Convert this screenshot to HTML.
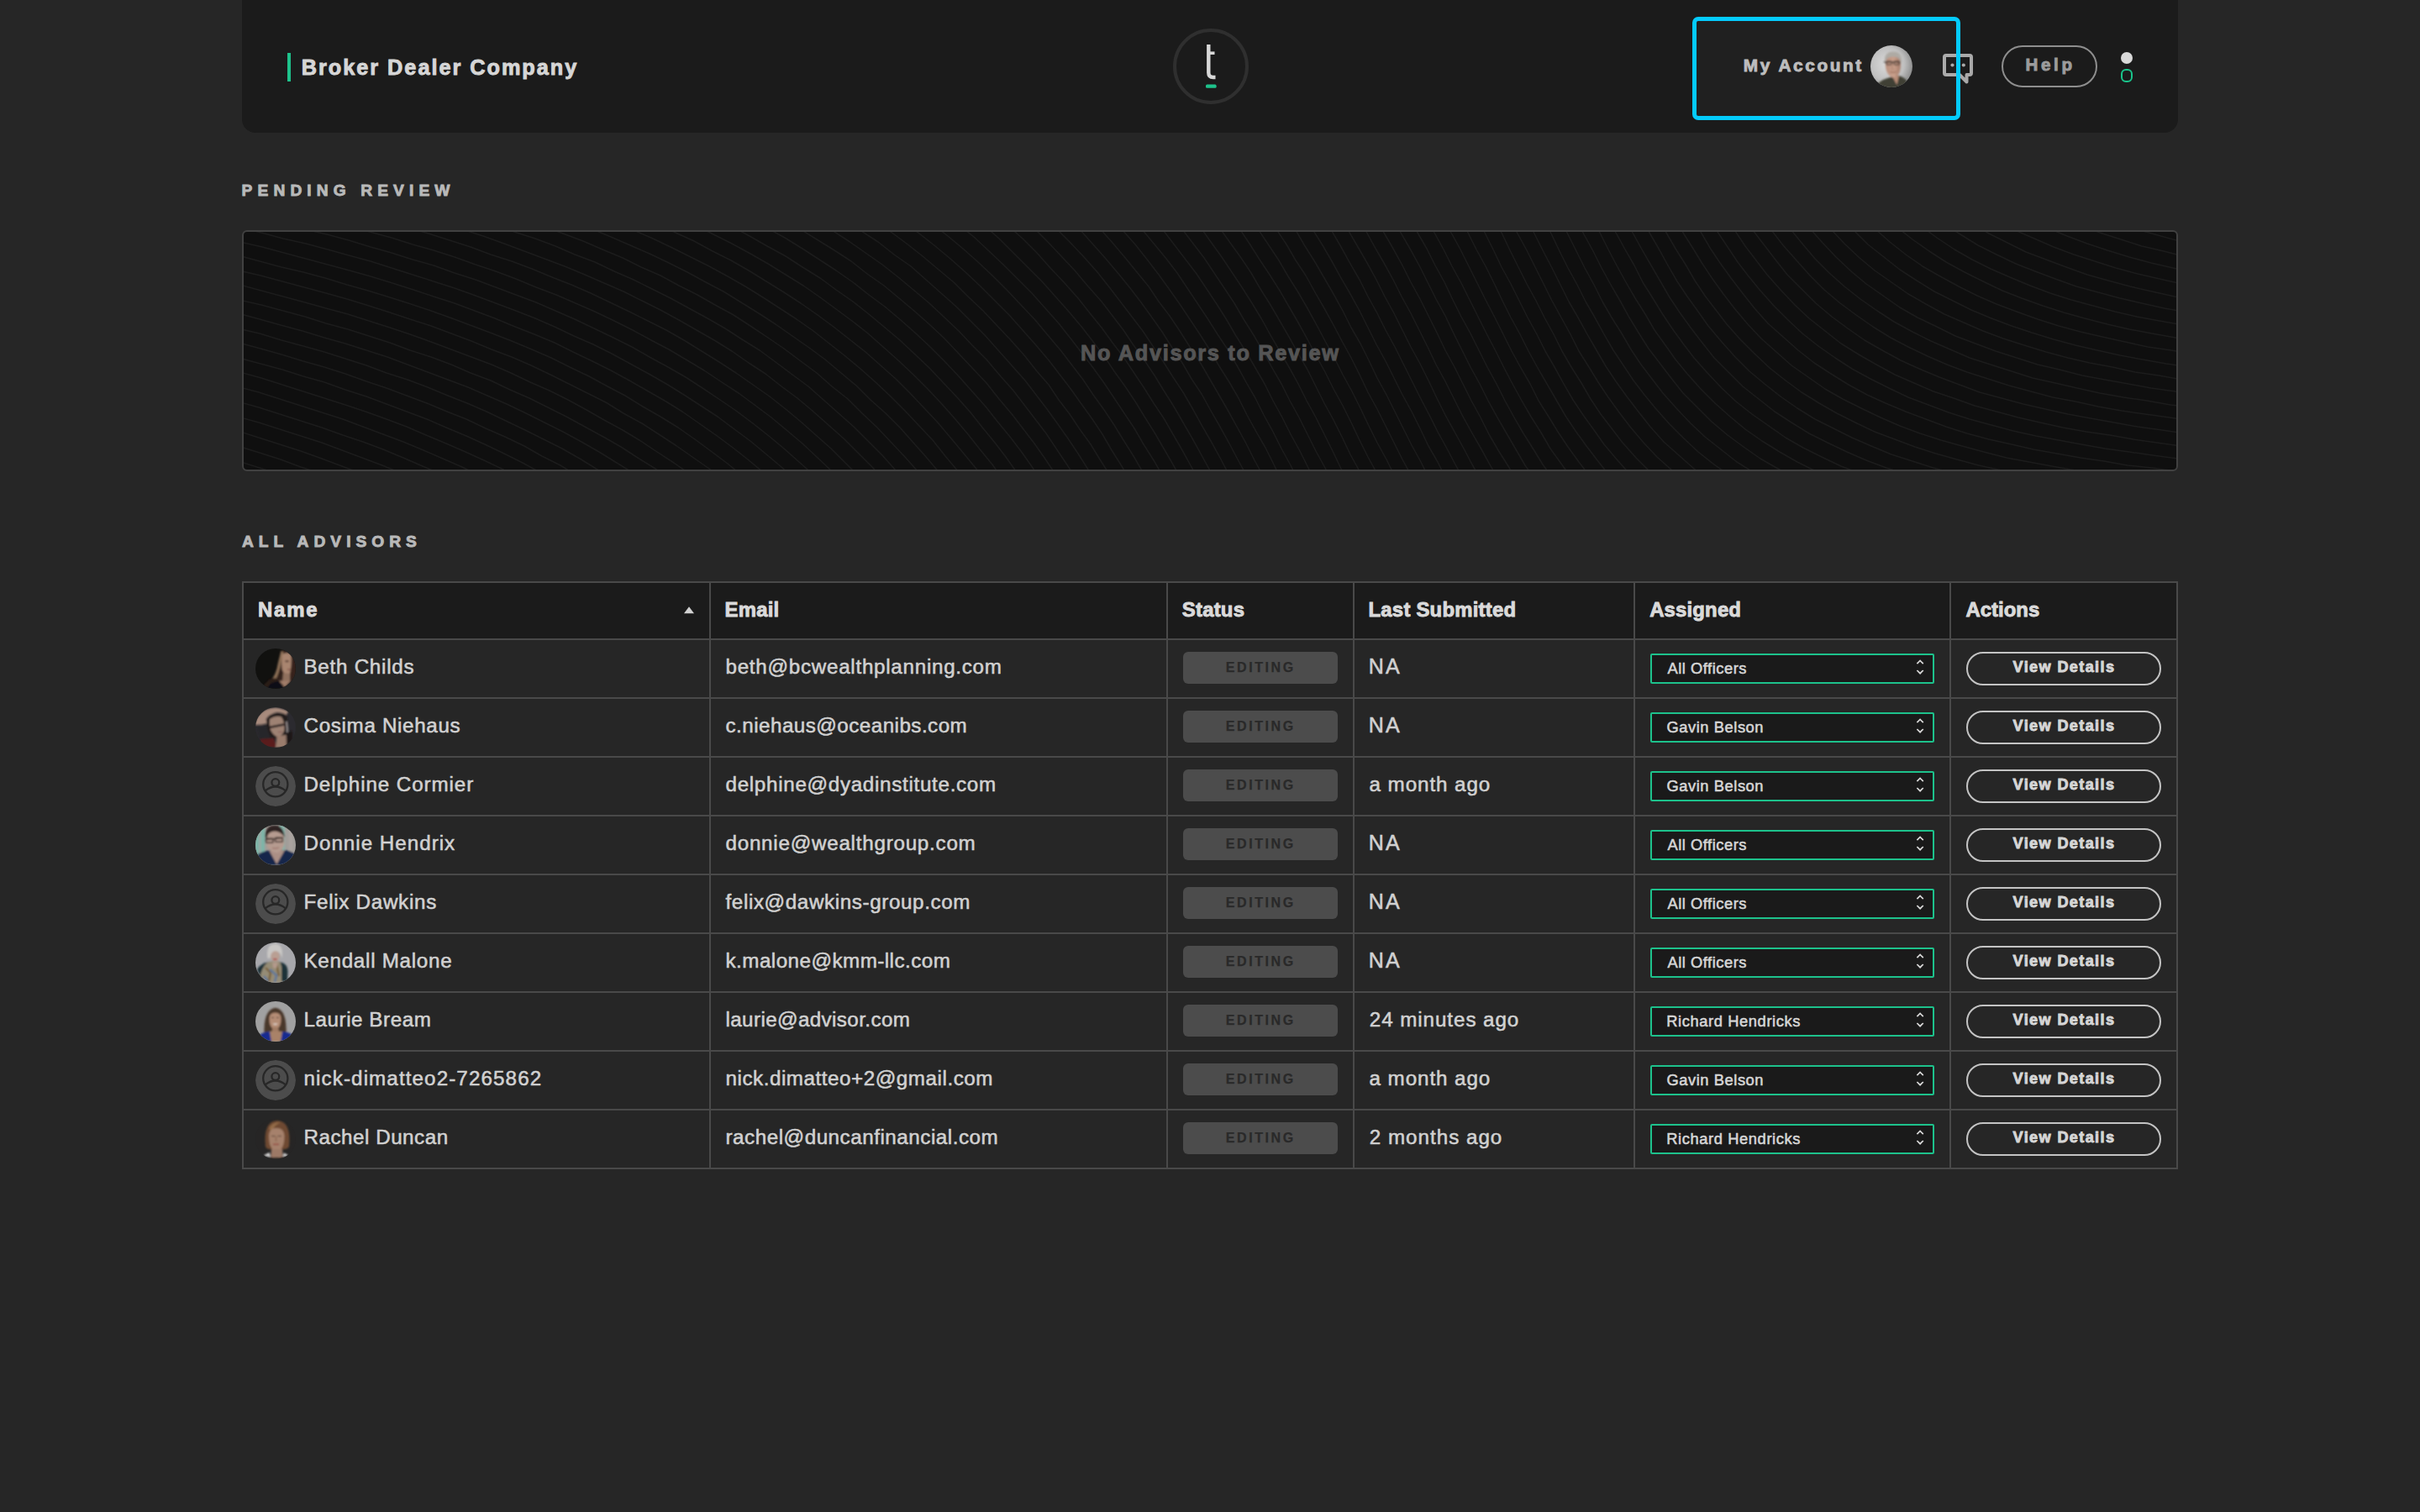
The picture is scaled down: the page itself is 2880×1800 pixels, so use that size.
<!DOCTYPE html>
<html><head><meta charset="utf-8"><title>Advisors</title><style>
*{margin:0;padding:0;box-sizing:border-box}
html,body{width:2880px;height:1800px;overflow:hidden;background:#262626}
body{font-family:"Liberation Sans",sans-serif;position:relative;color:#d4d4d4}
.abs{position:absolute}
.t{position:absolute;white-space:nowrap;line-height:1;-webkit-text-stroke:0.55px currentColor}
.t.b{-webkit-text-stroke:0.9px currentColor}
.t.ns{-webkit-text-stroke:0.25px currentColor}
#hdr{left:288px;top:0;width:2304px;height:158px;background:#1b1b1b;border-radius:0 0 16px 16px}
#gbar{left:342px;top:63px;width:4px;height:34px;background:#1ec28b}
#acct{left:2014px;top:20px;width:319px;height:123px;border:5px solid #04cbfd;border-radius:7px;background:rgba(255,255,255,0.022)}
#help{left:2382px;top:54px;width:114px;height:50px;border:2px solid #8e8e8e;border-radius:25px}
#wdot{left:2524px;top:62px;width:14px;height:14px;border-radius:7px;background:#d9d9d9}
#gdot{left:2524px;top:82px;width:14px;height:16px;border-radius:6px;border:2px solid #19c48b}
#pbox{left:288px;top:274px;width:2304px;height:287px;border:2px solid #414141;border-radius:6px;background:#0f0f0f;overflow:hidden}
#tbl{left:288px;top:692px;width:2304px;height:700px;background:#494949}
.c{position:absolute;background:#262626}
.c.h{background:#1b1b1b}
.badge{position:absolute;width:184px;height:38px;border-radius:6px;background:#4c4c4c}
.sel{position:absolute;width:338px;height:36px;border:2px solid #1dc28c;border-radius:2px;background:#1a1a1a}
.vd{position:absolute;width:232px;height:40px;border:2px solid #c4c4c4;border-radius:20px}
.av{position:absolute;width:48px;height:48px;border-radius:24px;overflow:hidden}
</style></head><body><div id="hdr" class="abs"></div>
<div id="gbar" class="abs"></div>
<div class="t bdc b" style="left:358.80px;top:67.58px;font-size:25.3px;font-weight:700;color:#d6d6d6;letter-spacing:1.963px">Broker Dealer Company</div>
<svg class="abs" style="left:1391px;top:29px" width="100" height="100" viewBox="0 0 100 100">
<circle cx="50" cy="50" r="43" fill="none" stroke="#2f2f2f" stroke-width="4"/>
<path d="M47.3 24 V57.5 Q47.3 63 52.8 63 H55.5" fill="none" stroke="#d8d8d8" stroke-width="4.4"/>
<path d="M47.3 34.2 H54.5" fill="none" stroke="#d8d8d8" stroke-width="3.6"/>
<rect x="44" y="71.6" width="12.6" height="4.2" rx="1.6" fill="#1ec28b"/>
</svg>
<svg class="abs" style="left:2308px;top:60px" width="48" height="44" viewBox="0 0 48 44">
<path d="M8 6 H36 Q38 6 38 8 V27 Q38 29 36 29 H32.5 V37.5 L24 29 H8 Q6 29 6 27 V8 Q6 6 8 6 Z" fill="none" stroke="#a9a9a9" stroke-width="4" stroke-linejoin="round"/>
<circle cx="15.5" cy="17.5" r="2.1" fill="#a9a9a9"/><circle cx="28.8" cy="17.5" r="2.1" fill="#a9a9a9"/>
</svg>
<div id="acct" class="abs"></div>
<div class="t myacct b" style="left:2074.80px;top:67.99px;font-size:20.8px;font-weight:700;color:#bdbdbd;letter-spacing:2.599px">My Account</div>
<svg class="abs" style="left:2226px;top:54px" width="50" height="50" viewBox="0 0 50 50">
<defs><clipPath id="cpa"><circle cx="25" cy="25" r="25"/></clipPath>
<radialGradient id="rga" cx="0.4" cy="0.45" r="0.62"><stop offset="0" stop-color="#dcdcdc"/><stop offset="0.65" stop-color="#bfbfbf"/><stop offset="1" stop-color="#8c8c8c"/></radialGradient>
<linearGradient id="fga" x1="0" x2="1"><stop offset="0" stop-color="#b98f7c"/><stop offset="0.55" stop-color="#c9a08c"/><stop offset="1" stop-color="#a47a68"/></linearGradient>
<filter id="bl1" x="-20%" y="-20%" width="140%" height="140%"><feGaussianBlur stdDeviation="1.0"/></filter></defs>
<g clip-path="url(#cpa)"><rect width="50" height="50" fill="url(#rga)"/>
<g filter="url(#bl1)">
<path d="M6 52 Q9 42 19 39.5 L31 35.5 Q40 37 43 42 L46 52 Z" fill="#3f4136"/>
<path d="M26 37 L34 36 L31.5 47 Z" fill="#b88c76"/>
<path d="M17.8 22 Q18 11.6 27 11.6 Q36 11.6 36 22 Q36 32 32 36.5 Q27.5 40.5 23 36.5 Q18 32 17.8 22Z" fill="url(#fga)"/>
<path d="M16.8 21 Q15.8 7.6 27 7.6 Q38 7.6 36.8 21 Q35 14 27 13.6 Q19 14 16.8 21Z" fill="#aeaaa4"/>
<path d="M15.8 19.8 L35.5 19.8" stroke="#3a302a" stroke-width="1.2"/>
<rect x="18.8" y="19" width="6.6" height="4" rx="1" fill="none" stroke="#3a302a" stroke-width="1"/>
<rect x="27.8" y="19" width="6.6" height="4" rx="1" fill="none" stroke="#3a302a" stroke-width="1"/>
<path d="M23.5 31.5 Q27 33 30.5 31.5" stroke="#8e6250" stroke-width="1" fill="none"/>
<path d="M26.5 23 L25.5 28.5 L28.5 28.5" stroke="#a87e6a" stroke-width="0.9" fill="none"/>
</g></g></svg>
<div id="help" class="abs"></div>
<div class="t helpt b" style="left:2410.50px;top:66.56px;font-size:20.6px;font-weight:700;color:#9c9c9c;letter-spacing:3.620px">Help</div>
<div id="wdot" class="abs"></div><div id="gdot" class="abs"></div>
<div class="t pr b" style="left:287.60px;top:216.85px;font-size:19.2px;font-weight:700;color:#b9b9b9;letter-spacing:6.111px">PENDING REVIEW</div>
<div id="pbox" class="abs"><svg class="abs" style="left:0;top:0" width="2300" height="283" viewBox="0 0 2300 283"><path d="M2309 -40L2335 -33L2358 -28M2252 -39L2277 -31L2303 -24L2329 -17L2356 -11L2359 -11M2201 -40L2225 -30L2249 -22L2275 -14L2300 -7L2327 -1L2354 5L2357 6M2157 -39L2180 -29L2203 -20L2228 -11L2253 -3L2278 4L2304 11L2331 17L2358 22M2116 -39L2139 -28L2161 -17L2185 -8L2209 1L2234 9L2259 17L2285 23L2312 30L2339 35L2360 39M2080 -39L2101 -27L2123 -15L2146 -5L2170 5L2194 14L2218 22L2244 30L2270 37L2296 43L2323 49L2351 54L2358 55M2045 -40L2065 -26L2086 -14L2108 -2L2131 8L2154 18L2178 27L2203 35L2228 43L2254 50L2280 56L2307 62L2335 67L2359 72M2016 -39L2035 -24L2055 -11L2077 2L2099 13L2121 24L2145 33L2169 42L2194 51L2219 58L2245 65L2271 71L2298 77L2326 82L2354 87L2357 87M1985 -40L2003 -24L2023 -10L2043 3L2064 16L2086 27L2109 38L2132 47L2156 56L2181 65L2207 72L2233 79L2259 85L2286 91L2313 96L2341 101L2359 104M1959 -38L1977 -22L1996 -7L2015 7L2036 21L2057 33L2079 44L2102 54L2126 64L2150 73L2175 81L2201 88L2227 95L2253 101L2280 106L2308 111L2336 116L2357 119M1932 -39L1949 -22L1967 -6L1986 9L2006 23L2026 36L2048 48L2070 59L2093 70L2116 79L2141 88L2166 96L2191 103L2218 110L2244 116L2271 121L2299 126L2327 131L2355 135L2359 136M1908 -38L1924 -20L1941 -4L1959 12L1978 27L1998 41L2019 53L2041 65L2063 76L2086 86L2110 95L2135 104L2160 112L2186 119L2212 125L2239 131L2266 137L2294 141L2322 146L2350 150L2357 151M1884 -38L1899 -20L1916 -2L1933 15L1952 30L1971 45L1991 58L2012 71L2034 82L2056 93L2080 103L2104 112L2128 120L2154 128L2180 135L2206 141L2233 147L2260 152L2288 157L2316 161L2345 165L2359 167M1860 -39L1873 -22L1889 -3L1905 14L1923 31L1941 46L1961 60L1981 74L2002 86L2024 98L2047 108L2070 118L2094 127L2119 135L2145 143L2171 150L2197 156L2224 161L2251 167L2279 171L2307 176L2336 180L2357 183M1837 -40L1849 -22L1863 -5L1879 13L1895 30L1913 47L1931 62L1951 76L1971 90L1992 102L2015 113L2037 124L2061 133L2085 142L2110 150L2135 158L2161 164L2188 171L2215 176L2243 181L2270 186L2299 190L2327 194L2356 198L2359 199M1816 -38L1828 -21L1841 -3L1854 13L1870 32L1887 49L1905 65L1924 80L1944 94L1964 107L1986 119L2008 130L2031 140L2054 150L2079 158L2104 166L2129 174L2156 180L2182 186L2209 192L2237 197L2265 201L2293 206L2322 209L2350 213L2358 214M1795 -37L1807 -19L1819 -1L1832 16L1848 34L1864 52L1881 69L1900 85L1919 99L1939 113L1960 126L1981 137L2004 148L2027 158L2051 167L2076 175L2101 183L2127 190L2153 197L2180 202L2207 208L2235 213L2263 217L2292 221L2320 225L2349 229L2360 230M1773 -39L1784 -21L1796 -2L1809 15L1822 32L1837 51L1854 68L1871 85L1890 101L1909 115L1929 129L1950 141L1972 153L1994 163L2018 173L2042 182L2066 191L2092 198L2118 205L2144 211L2171 217L2198 222L2226 227L2254 232L2283 236L2311 240L2340 243L2358 245M1752 -39L1764 -20L1775 -1L1787 17L1800 34L1813 51L1829 69L1846 87L1863 103L1882 118L1901 133L1922 146L1943 158L1965 170L1988 180L2011 190L2035 198L2060 207L2086 214L2112 221L2138 227L2165 233L2193 238L2221 242L2249 247L2277 251L2306 255L2335 258L2357 261M1732 -39L1743 -19L1754 -0L1766 18L1778 36L1791 53L1805 70L1821 88L1838 105L1855 121L1874 136L1894 150L1914 163L1936 175L1958 186L1981 197L2005 206L2029 215L2054 223L2080 230L2106 237L2133 243L2160 248L2187 253L2215 258L2244 262L2272 266L2301 270L2330 273L2359 277M1712 -39L1723 -19L1734 0L1745 19L1757 37L1770 55L1783 72L1798 91L1814 109L1832 125L1850 141L1869 156L1889 169L1910 182L1932 194L1954 204L1978 214L2002 223L2026 232L2051 240L2077 247L2104 253L2130 259L2158 264L2186 269L2214 273L2242 278L2271 281L2299 285L2328 289L2357 292M1692 -39L1703 -19L1713 1L1725 20L1736 38L1748 56L1761 74L1774 91L1790 110L1806 127L1824 143L1842 159L1862 173L1882 187L1903 199L1925 210L1948 221L1971 231L1995 240L2020 248L2045 255L2071 262L2098 269L2125 274L2152 279L2180 284L2208 289L2237 293L2265 296L2294 300L2323 304L2352 307L2359 308M1672 -39L1683 -19L1693 1L1704 20L1716 39L1727 58L1739 76L1752 93L1765 110L1781 128L1798 145L1816 162L1835 177L1854 191L1875 204L1896 216L1918 227L1941 238L1965 247L1989 256L2014 264L2039 271L2065 278L2092 284L2119 290L2147 295L2175 299L2203 304L2231 308L2260 311L2289 315L2318 319L2347 322L2354 323M1652 -39L1663 -19L1673 1L1684 20L1695 40L1706 59L1718 77L1731 95L1743 112L1759 131L1775 149L1792 166L1810 181L1829 196L1849 210L1870 223L1892 234L1914 245L1937 255L1961 265L1986 273L2011 281L2037 288L2063 294L2090 300L2117 306L2145 311L2173 315L2201 319L2226 323M1632 -39L1643 -19L1653 1L1664 21L1675 40L1686 59L1697 78L1709 96L1722 114L1735 131L1750 150L1767 167L1784 184L1803 199L1822 214L1842 227L1863 240L1885 251L1908 262L1931 272L1955 281L1980 289L2005 297L2031 304L2057 310L2084 316L2112 321L2122 323M1613 -39L1623 -19L1633 1L1644 21L1655 40L1665 60L1677 79L1688 97L1700 115L1713 133L1726 150L1742 168L1759 186L1776 202L1795 217L1815 231L1835 245L1856 257L1878 268L1901 279L1925 288L1949 297L1974 305L1999 313L2025 320L2038 323M1593 -40L1603 -20L1614 1L1624 21L1634 40L1645 60L1656 79L1668 98L1679 117L1692 135L1704 152L1718 169L1734 187L1751 204L1769 220L1787 235L1807 249L1828 262L1849 274L1871 285L1894 295L1918 305L1942 313L1967 321L1971 322M1575 -37L1585 -17L1595 3L1606 23L1616 43L1627 63L1638 82L1649 102L1660 120L1672 139L1685 156L1698 173L1713 192L1730 209L1747 226L1766 242L1785 256L1805 270L1826 282L1848 294L1870 304L1894 314L1915 322M1555 -38L1565 -17L1576 3L1586 23L1596 43L1607 63L1617 83L1628 102L1640 121L1651 140L1663 158L1676 175L1689 192L1705 210L1722 228L1739 244L1758 259L1777 274L1798 287L1819 299L1841 311L1864 321L1867 322M1535 -38L1546 -18L1556 2L1566 23L1576 43L1587 63L1597 83L1608 102L1619 122L1630 141L1642 159L1654 177L1667 194L1681 211L1697 229L1714 246L1731 262L1750 277L1770 291L1790 304L1812 316L1823 322M1516 -38L1526 -18L1536 2L1546 22L1557 43L1567 63L1577 83L1588 102L1599 122L1610 141L1621 160L1633 178L1646 196L1659 213L1674 232L1690 250L1708 266L1726 282L1745 297L1765 310L1786 323M1496 -38L1506 -18L1516 2L1527 22L1537 42L1547 62L1557 82L1568 102L1579 122L1589 142L1601 161L1612 179L1624 197L1637 215L1650 232L1666 251L1682 268L1700 284L1718 300L1738 314L1750 323M1476 -39L1486 -19L1497 1L1507 22L1517 42L1527 62L1538 82L1548 102L1559 122L1569 142L1580 161L1592 180L1603 199L1615 217L1628 234L1641 251L1657 269L1674 286L1692 303L1711 318L1715 321M1456 -39L1467 -19L1477 1L1487 21L1497 42L1508 62L1518 82L1528 102L1539 122L1549 142L1560 161L1571 181L1582 200L1594 218L1607 236L1619 253L1635 272L1651 290L1668 307L1686 322M1436 -39L1447 -19L1457 1L1467 21L1478 41L1488 61L1498 82L1508 102L1519 122L1529 142L1540 162L1551 181L1562 200L1573 219L1585 237L1598 255L1611 272L1626 291L1643 308L1658 323M1416 -39L1427 -19L1437 1L1448 21L1458 41L1468 61L1478 81L1489 102L1499 122L1509 142L1520 162L1531 181L1541 201L1553 220L1564 238L1576 256L1589 274L1602 291L1618 309L1631 322M1396 -39L1407 -19L1417 1L1428 21L1438 41L1449 61L1459 81L1469 101L1479 121L1490 142L1500 162L1510 181L1521 201L1532 220L1544 239L1555 258L1568 276L1580 293L1594 310L1604 321M1376 -38L1387 -19L1397 1L1408 20L1418 40L1429 60L1439 81L1449 101L1460 121L1470 141L1480 161L1491 181L1501 201L1512 221L1523 240L1535 259L1546 277L1559 295L1572 312L1579 321M1355 -38L1366 -19L1377 1L1388 20L1399 40L1409 60L1419 80L1430 100L1440 121L1450 141L1460 161L1471 181L1481 201L1492 221L1503 240L1514 259L1525 278L1538 296L1550 314L1556 321M1335 -38L1346 -18L1357 1L1368 20L1379 40L1389 60L1400 80L1410 100L1420 120L1430 141L1441 161L1451 181L1461 201L1472 221L1482 241L1493 260L1505 279L1516 297L1529 315L1534 323M1313 -40L1324 -21L1335 -2L1346 18L1357 37L1368 57L1378 77L1389 97L1399 117L1409 137L1419 158L1430 178L1440 198L1450 218L1461 238L1472 257L1483 277L1494 296L1506 314L1511 322M1292 -39L1304 -20L1315 -1L1326 18L1337 37L1348 57L1358 77L1369 97L1379 117L1389 137L1400 157L1410 177L1420 198L1430 218L1441 238L1452 258L1462 277L1473 296L1485 315L1490 323M1271 -38L1283 -19L1295 -1L1306 18L1317 38L1328 57L1338 77L1349 97L1359 117L1370 137L1380 157L1390 177L1400 197L1411 218L1421 238L1432 258L1442 277L1453 297L1464 316L1468 321M1249 -39L1261 -21L1272 -3L1284 16L1295 35L1306 55L1317 74L1328 94L1338 114L1348 134L1359 154L1369 174L1379 194L1390 214L1400 234L1410 255L1421 274L1431 294L1442 314L1447 322M1228 -38L1240 -20L1252 -2L1263 17L1275 36L1286 55L1297 74L1308 94L1318 114L1329 133L1339 153L1349 174L1360 194L1370 214L1380 234L1390 254L1401 274L1411 294L1422 314L1427 322M1205 -39L1217 -22L1229 -3L1241 15L1252 34L1264 52L1275 72L1286 91L1297 111L1307 130L1318 150L1328 170L1338 191L1349 211L1359 231L1369 251L1379 271L1390 291L1400 311L1407 322M1183 -38L1196 -20L1208 -2L1220 16L1232 34L1243 53L1255 72L1266 91L1277 111L1287 130L1298 150L1308 170L1319 190L1329 210L1339 231L1349 251L1360 271L1370 291L1380 311L1386 322M1160 -38L1173 -21L1185 -4L1197 14L1209 33L1221 51L1233 70L1244 89L1255 108L1266 128L1276 147L1287 167L1297 187L1308 207L1318 227L1328 248L1338 268L1349 288L1359 308L1367 322M1136 -39L1149 -22L1162 -4L1174 13L1187 31L1199 49L1210 68L1222 87L1233 106L1244 125L1255 145L1266 164L1276 184L1286 204L1297 224L1307 244L1317 265L1328 285L1338 305L1347 322M1112 -39L1125 -22L1139 -5L1151 12L1164 30L1176 48L1188 66L1200 85L1211 103L1222 123L1233 142L1244 161L1255 181L1265 201L1276 221L1286 241L1296 261L1306 282L1317 302L1327 322M1088 -39L1104 -20L1117 -3L1130 14L1143 31L1155 49L1167 67L1179 85L1190 104L1202 123L1213 142L1224 162L1235 181L1245 201L1256 221L1266 241L1276 261L1287 281L1297 301L1307 322M1064 -38L1079 -20L1095 -1L1108 16L1121 33L1134 50L1146 68L1158 86L1170 105L1181 124L1193 143L1204 162L1215 181L1225 201L1236 221L1246 241L1257 261L1267 281L1277 301L1287 321M1037 -40L1053 -22L1069 -3L1084 15L1098 32L1111 49L1123 67L1135 85L1147 103L1159 122L1171 140L1182 159L1193 179L1204 198L1214 218L1225 238L1235 258L1246 278L1256 298L1266 318L1268 321M1012 -39L1029 -21L1045 -3L1061 15L1076 34L1089 51L1102 69L1114 86L1126 104L1138 122L1150 141L1161 160L1173 179L1184 198L1194 218L1205 238L1216 257L1226 277L1236 298L1247 318L1248 321M985 -40L1002 -22L1018 -5L1034 13L1050 32L1063 48L1077 65L1089 83L1102 100L1114 118L1126 137L1138 155L1149 174L1160 193L1171 212L1182 232L1193 252L1203 272L1214 292L1224 312L1228 320M959 -38L977 -21L994 -4L1010 14L1026 32L1042 51L1055 67L1068 84L1081 102L1093 119L1105 138L1117 156L1128 175L1140 193L1151 213L1162 232L1173 252L1183 271L1194 291L1204 311L1210 323M932 -38L949 -22L966 -5L983 12L1000 30L1016 48L1031 67L1044 84L1057 101L1070 118L1082 136L1094 154L1106 173L1118 191L1129 210L1140 230L1151 249L1162 269L1172 288L1183 308L1190 323M903 -38L921 -22L939 -6L956 11L973 29L989 46L1005 65L1021 83L1034 100L1047 117L1059 135L1072 153L1084 171L1095 189L1107 208L1118 227L1129 246L1140 266L1151 286L1161 305L1170 322M873 -39L891 -24L909 -8L927 8L944 25L960 43L977 61L993 79L1008 98L1021 114L1034 132L1047 149L1059 167L1071 185L1083 204L1095 222L1106 241L1117 260L1128 280L1139 300L1149 319L1151 322M844 -38L863 -23L881 -8L899 8L916 25L933 42L950 59L966 77L982 95L998 114L1011 131L1024 148L1036 166L1049 184L1061 202L1072 220L1084 239L1095 258L1106 277L1117 297L1128 317L1131 322M812 -39L831 -24L850 -9L869 6L886 22L904 39L921 56L938 73L954 91L970 109L985 128L998 145L1011 162L1024 180L1036 198L1048 216L1060 234L1071 253L1083 272L1094 291L1105 311L1111 322M780 -38L800 -25L819 -10L838 5L856 20L874 36L892 53L909 70L925 87L942 105L957 123L973 142L986 159L999 176L1011 194L1024 212L1036 230L1047 248L1059 267L1070 286L1081 306L1091 322M745 -39L765 -26L785 -12L804 2L823 17L841 32L859 48L877 65L894 82L911 99L927 117L943 135L959 154L972 171L985 188L997 205L1010 223L1022 241L1033 260L1045 279L1056 298L1067 317L1070 322M709 -40L730 -27L750 -14L770 0L789 14L808 29L827 45L845 60L862 77L880 94L896 111L913 129L929 147L944 166L958 182L970 200L983 217L995 235L1008 253L1019 271L1031 290L1042 309L1050 323M673 -40L694 -27L715 -15L735 -1L755 12L774 27L794 41L812 57L830 73L848 89L865 106L882 123L898 141L914 159L930 177L943 194L956 211L969 229L981 246L993 264L1005 283L1017 301L1028 320M636 -39L658 -27L679 -15L700 -2L720 11L740 25L760 39L779 54L797 69L816 85L833 101L851 118L867 135L884 152L900 171L916 189L929 206L942 223L955 240L967 258L979 276L991 294L1003 313L1008 321M597 -39L619 -28L640 -16L661 -4L682 9L703 22L723 35L742 50L762 64L780 79L799 95L817 111L834 127L851 145L867 162L884 180L899 199L915 218L928 235L941 252L953 269L965 287L977 306L987 322M556 -39L579 -28L601 -17L622 -5L644 7L665 20L685 33L705 46L725 60L744 75L763 89L782 105L800 121L817 137L834 154L851 172L867 190L883 208L898 227L912 244L925 261L937 278L949 296L961 315L966 322M513 -39L535 -29L558 -18L580 -7L602 5L623 17L645 29L665 42L686 55L705 69L725 83L744 98L762 113L781 129L798 145L816 162L832 179L849 197L865 215L880 234L894 251L907 268L919 285L932 303L944 321M468 -39L492 -29L515 -19L537 -8L559 3L581 14L603 26L624 38L645 51L666 64L686 78L705 92L724 106L743 121L761 137L779 153L797 170L814 187L830 204L846 222L862 241L877 260L891 277L903 294L916 312L923 322M420 -39L444 -30L468 -20L491 -10L514 1L536 11L558 23L580 34L601 46L622 59L643 72L663 85L683 99L702 113L721 128L740 143L758 159L776 175L793 192L810 210L826 227L842 246L857 264L871 281L884 298L896 316L900 321M369 -39L393 -31L417 -21L440 -12L464 -2L487 8L510 19L532 30L554 41L576 53L597 65L618 78L638 91L658 104L678 118L697 133L716 148L734 163L752 179L770 196L787 213L803 230L820 248L835 267L851 286L864 303L877 320L879 322M316 -39L341 -31L365 -22L389 -13L413 -4L437 6L460 16L483 26L506 37L528 48L550 60L571 71L592 84L613 97L633 110L653 124L673 138L692 152L711 168L729 183L746 200L764 216L781 233L797 251L813 269L829 288L842 305L855 322M257 -40L282 -32L307 -24L332 -15L356 -7L380 2L404 11L427 21L451 31L473 42L496 52L518 64L540 75L561 87L583 99L603 112L624 126L643 139L663 154L682 168L700 184L719 199L736 216L754 233L770 250L787 268L803 286L818 304L832 321M197 -40L222 -32L248 -25L273 -17L298 -9L322 -0L347 8L371 17L394 27L418 36L441 47L464 57L486 68L508 79L530 91L552 103L573 115L593 128L614 141L633 155L653 170L672 184L690 200L708 216L726 232L743 249L760 266L776 284L792 302L808 321M133 -40L159 -33L185 -26L210 -18L235 -11L260 -3L285 5L310 14L334 23L358 32L382 41L406 51L429 61L452 71L474 82L496 93L518 105L539 117L560 129L581 142L601 156L621 169L640 184L659 198L678 214L696 230L714 246L731 263L748 280L764 298L780 316L784 321M65 -40L91 -33L117 -26L143 -20L169 -12L195 -5L220 2L245 10L270 18L294 27L319 35L343 44L367 54L390 63L413 73L436 84L459 95L481 106L503 117L524 129L545 142L566 155L586 168L606 182L626 196L645 211L663 226L681 242L699 258L716 275L733 292L750 310L760 321M-7 -40L20 -34L46 -27L72 -21L98 -14L124 -7L150 -0L176 7L201 15L226 22L251 30L276 39L300 47L324 56L348 66L372 75L395 85L418 95L441 106L463 117L485 129L506 140L528 153L548 165L569 179L589 192L608 206L628 221L646 236L665 252L682 268L700 285L717 302L733 319L735 322M-59 -35L-33 -29L-6 -23L20 -16L47 -10L73 -3L99 3L125 10L151 18L176 25L201 33L226 40L251 49L276 57L300 66L324 75L348 84L371 94L394 104L417 115L440 126L462 137L483 149L505 161L526 173L546 186L567 200L586 213L606 228L625 243L643 258L661 274L679 290L696 307L710 322M-58 -18L-32 -12L-5 -5L21 1L47 8L74 14L100 21L125 28L151 35L176 43L201 51L226 59L251 67L276 76L300 85L324 94L347 103L370 113L393 124L416 134L438 145L460 157L482 169L503 181L524 194L544 207L564 220L584 235L603 249L621 264L640 280L658 296L675 313L683 321M-57 -1L-31 6L-4 12L22 18L48 25L74 32L100 39L126 46L151 53L177 61L202 69L226 77L251 85L275 94L299 103L323 113L346 122L370 132L392 143L415 154L437 165L459 177L480 189L501 201L522 214L542 228L562 242L581 256L600 271L618 286L636 302L654 319L658 323M-60 16L-33 22L-7 28L19 35L45 42L71 48L97 55L123 63L148 70L174 78L199 86L223 94L248 103L272 112L296 121L319 130L343 140L366 150L388 161L411 172L433 184L454 195L475 208L496 220L517 233L537 247L556 261L576 276L594 291L613 306L631 322M-59 33L-33 39L-6 46L20 52L46 59L72 66L98 73L123 80L149 88L174 96L198 104L223 112L247 121L271 130L295 140L319 149L342 159L365 170L387 181L409 192L431 203L452 216L474 228L494 241L514 254L534 268L554 282L573 297L591 312L603 322M-58 50L-32 57L-5 63L21 70L47 77L73 84L98 91L124 98L149 106L174 114L198 122L223 131L247 140L271 149L295 158L318 168L341 179L364 189L386 200L408 212L429 224L451 236L471 248L492 262L512 275L532 289L551 304L570 319L574 323M-57 68L-31 74L-5 81L21 87L47 94L73 101L98 109L124 116L149 124L174 132L198 141L223 149L247 158L270 168L294 177L317 188L340 198L362 209L384 220L406 232L428 244L449 256L469 269L490 282L509 296L529 311L543 322M-60 84L-34 90L-7 97L19 104L44 111L70 118L96 126L121 133L146 141L171 149L195 158L219 167L243 176L267 185L290 195L313 205L336 216L358 227L380 238L402 250L423 262L444 275L465 288L485 302L504 316L514 323M-59 101L-33 108L-7 115L19 121L45 129L71 136L96 143L121 151L146 159L170 168L195 176L219 185L243 195L266 204L289 214L312 225L335 236L357 247L379 258L400 270L421 283L442 296L462 309L482 323M-58 119L-32 125L-6 132L20 139L45 146L71 154L96 161L121 169L146 178L170 186L194 195L218 204L242 214L265 223L288 234L311 244L334 255L355 267L377 278L398 291L419 303L440 316L447 321M-58 136L-32 143L-6 150L20 157L46 164L71 172L96 179L121 188L146 196L170 205L194 214L218 223L241 233L265 243L287 253L310 264L332 275L354 287L375 299L397 311L415 322M-57 154L-31 160L-5 167L21 174L46 182L71 190L96 198L121 206L145 214L170 223L194 232L217 242L241 252L264 262L286 272L309 283L331 295L352 307L374 319L379 322M-60 170L-34 177L-8 184L18 191L43 199L68 207L93 215L118 223L142 232L166 241L190 250L214 260L237 270L260 280L282 291L305 302L326 313L343 322M-59 188L-33 195L-7 202L18 209L43 217L68 225L93 233L118 242L142 250L166 259L190 269L213 279L236 289L259 299L281 310L303 322M-58 205L-33 212L-7 220L18 227L43 235L68 243L93 251L117 260L141 269L165 278L189 288L212 298L235 308L258 319L266 323M-58 223L-32 230L-7 237L18 245L43 253L68 261L93 270L117 279L141 288L165 297L188 307L211 317L223 322M-57 240L-32 248L-7 255L19 263L44 271L68 280L93 288L117 297L141 306L164 316L179 322M-57 258L-32 266L-6 273L19 281L43 289L68 298L92 307L116 316L134 323M-60 275L-34 283L-9 290L16 298L40 307L65 315L83 322M-60 293L-34 300L-9 308L16 317L34 323M-59 311L-34 319L-22 322" fill="none" stroke="#1c1c1c" stroke-width="1.5" stroke-linejoin="round"/></svg></div>
<div class="t noadv b" style="left:1286.00px;top:408.30px;font-size:25.4px;font-weight:700;color:#555555;letter-spacing:1.635px">No Advisors to Review</div>
<div class="t aa b" style="left:288.00px;top:634.65px;font-size:19.2px;font-weight:700;color:#b9b9b9;letter-spacing:6.010px">ALL ADVISORS</div>
<div id="tbl" class="abs"></div>
<div class="c h" style="left:290px;top:694px;width:554px;height:66px"></div>
<div class="t th b" style="left:307.00px;top:713.77px;font-size:23.9px;font-weight:700;color:#dadada;letter-spacing:1.835px">Name</div>
<div class="c h" style="left:846px;top:694px;width:542px;height:66px"></div>
<div class="t th b" style="left:862.50px;top:713.77px;font-size:23.9px;font-weight:700;color:#dadada;letter-spacing:0.234px">Email</div>
<div class="c h" style="left:1390px;top:694px;width:220px;height:66px"></div>
<div class="t th b" style="left:1406.80px;top:713.77px;font-size:23.9px;font-weight:700;color:#dadada;letter-spacing:0.231px">Status</div>
<div class="c h" style="left:1612px;top:694px;width:332px;height:66px"></div>
<div class="t th b" style="left:1628.50px;top:713.77px;font-size:23.9px;font-weight:700;color:#dadada;letter-spacing:0.236px">Last Submitted</div>
<div class="c h" style="left:1946px;top:694px;width:374px;height:66px"></div>
<div class="t th b" style="left:1963.20px;top:713.77px;font-size:23.9px;font-weight:700;color:#dadada;letter-spacing:0.175px">Assigned</div>
<div class="c h" style="left:2322px;top:694px;width:268px;height:66px"></div>
<div class="t th b" style="left:2339.50px;top:713.77px;font-size:23.9px;font-weight:700;color:#dadada;letter-spacing:0.026px">Actions</div>
<svg class="abs" style="left:813px;top:721px" width="14" height="10" viewBox="0 0 14 10"><path d="M1 9.2 L7 1.2 L13 9.2Z" fill="#d2d2d2"/></svg>
<svg width="0" height="0" style="position:absolute"><defs><filter id="b2" x="-20%" y="-20%" width="140%" height="140%"><feGaussianBlur stdDeviation="0.9"/></filter></defs></svg>
<div class="c" style="left:290px;top:762px;width:554px;height:68px"></div>
<div class="c" style="left:846px;top:762px;width:542px;height:68px"></div>
<div class="c" style="left:1390px;top:762px;width:220px;height:68px"></div>
<div class="c" style="left:1612px;top:762px;width:332px;height:68px"></div>
<div class="c" style="left:1946px;top:762px;width:374px;height:68px"></div>
<div class="c" style="left:2322px;top:762px;width:268px;height:68px"></div>
<svg class="av" style="left:304px;top:772px" viewBox="0 0 48 48"><rect width="48" height="48" fill="#11110f"/>
<g filter="url(#b2)">
<path d="M9 46 Q14 36 24 34 L31 40 L31 48 L9 48Z" fill="#2a1d19"/>
<path d="M30 3 Q40 -1 47 8 L49 30 L44 41 L30 41 L23 35 Q28 20 30 3Z" fill="#33231c"/>
<path d="M30.5 3 Q27 16 25.5 24 Q24 30 20.5 35.5 L25 35.5 Q28 28 29.5 22 Q31 12 33.5 4Z" fill="#8d6f56"/>
<path d="M32 7 Q38 3 43.5 8 L43.5 26 Q41 31.5 37 31.5 Q33 30 31.5 24 Q30.5 14 32 7Z" fill="#a98570"/>
<path d="M42.5 7 Q48 12 48 24 Q46 32 43 37 L41 30 Q43.5 20 42.5 7Z" fill="#38241c"/>
<ellipse cx="37.5" cy="15.3" rx="2.4" ry="1" fill="#4a2f28"/>
<path d="M38 25 h4" stroke="#7c4a42" stroke-width="1.2"/>
<path d="M33 29 L41 30 L41 40 L32 40Z" fill="#8f6f5d"/>
<path d="M28 38.5 L42.5 38.5 L35 46.5Z" fill="#a07d69"/>
<path d="M13 48 L19 41 L28 38.5 L34.5 46.5 L42 38.5 L47 40 L47 48Z" fill="#0c0c13"/>
</g></svg>
<div class="t nm" style="left:361.50px;top:781.81px;font-size:24.2px;font-weight:400;color:#d1d1d1;letter-spacing:0.734px">Beth Childs</div>
<div class="t em" style="left:863.50px;top:781.81px;font-size:24.2px;font-weight:400;color:#d1d1d1;letter-spacing:0.728px">beth@bcwealthplanning.com</div>
<div class="badge" style="left:1408px;top:776px"></div>
<div class="t ed ns b" style="left:1458.80px;top:786.76px;font-size:16px;font-weight:700;color:#292929;letter-spacing:2.585px">EDITING</div>
<div class="t ls" style="left:1628.80px;top:781.14px;font-size:25.0px;font-weight:400;color:#d1d1d1;letter-spacing:2.070px">NA</div>
<div class="sel" style="left:1964px;top:778px"></div>
<div class="t as" style="left:1984.50px;top:787.01px;font-size:18.3px;font-weight:400;color:#d6d6d6;letter-spacing:0.542px">All Officers</div>
<svg class="abs" style="left:2278.5px;top:784.2px" width="12" height="22" viewBox="0 0 12 22"><path d="M2.4 6.1 L6.1 2.5 L9.8 6.1 M2.4 14 L6.1 17.7 L9.8 14" fill="none" stroke="#dadada" stroke-width="1.7"/></svg>
<div class="vd" style="left:2340px;top:776px"></div>
<div class="t vdt b" style="left:2395.60px;top:784.68px;font-size:18.1px;font-weight:700;color:#d6d6d6;letter-spacing:1.372px">View Details</div>
<div class="c" style="left:290px;top:832px;width:554px;height:68px"></div>
<div class="c" style="left:846px;top:832px;width:542px;height:68px"></div>
<div class="c" style="left:1390px;top:832px;width:220px;height:68px"></div>
<div class="c" style="left:1612px;top:832px;width:332px;height:68px"></div>
<div class="c" style="left:1946px;top:832px;width:374px;height:68px"></div>
<div class="c" style="left:2322px;top:832px;width:268px;height:68px"></div>
<svg class="av" style="left:304px;top:842px" viewBox="0 0 48 48"><rect width="48" height="48" fill="#2b2a2f"/>
<g filter="url(#b2)">
<path d="M6 36 L22 37 L26 48 L6 48Z" fill="#5a1c1f"/>
<path d="M0 22 L16 21 L19 37 L4 38Z" fill="#28272b"/>
<path d="M-1 21 Q1 9 12 3 Q24 -3 39 5 L37 9 Q28 4 22 7 Q14 10 12.5 15 L15 19 Q8 21 -1 21Z" fill="#a88b7d"/>
<path d="M13 15 Q16 8 24 7 Q33 6 37 10 Q40 20 38 33 L34 40 L18 36 Q13 26 13 15Z" fill="#231b1a"/>
<path d="M17 14 Q24 9 31 11.5 Q35 18 34.5 27 Q32 35 26 35.5 Q21 33 18 27 Q16 20 17 14Z" fill="#9e8273"/>
<path d="M16.5 24 L34 20.5" stroke="#241b1b" stroke-width="2.6"/>
<path d="M37 17 Q39 26 37.5 35" stroke="#aaa2a2" stroke-width="1.6" fill="none"/>
<path d="M25.5 34 L36.5 33 L37 48 L24 48Z" fill="#9a7c6c"/>
<path d="M37 30 L44 28 L44 44 L37 48Z" fill="#1e1817"/>
<path d="M27 29.5 h5" stroke="#8a5a56" stroke-width="1.1"/>
</g></svg>
<div class="t nm" style="left:361.50px;top:851.81px;font-size:24.2px;font-weight:400;color:#d1d1d1;letter-spacing:0.673px">Cosima Niehaus</div>
<div class="t em" style="left:863.50px;top:851.81px;font-size:24.2px;font-weight:400;color:#d1d1d1;letter-spacing:0.472px">c.niehaus@oceanibs.com</div>
<div class="badge" style="left:1408px;top:846px"></div>
<div class="t ed ns b" style="left:1458.80px;top:856.76px;font-size:16px;font-weight:700;color:#292929;letter-spacing:2.585px">EDITING</div>
<div class="t ls" style="left:1628.80px;top:851.14px;font-size:25.0px;font-weight:400;color:#d1d1d1;letter-spacing:2.070px">NA</div>
<div class="sel" style="left:1964px;top:848px"></div>
<div class="t as" style="left:1983.50px;top:857.01px;font-size:18.3px;font-weight:400;color:#d6d6d6;letter-spacing:0.569px">Gavin Belson</div>
<svg class="abs" style="left:2278.5px;top:854.2px" width="12" height="22" viewBox="0 0 12 22"><path d="M2.4 6.1 L6.1 2.5 L9.8 6.1 M2.4 14 L6.1 17.7 L9.8 14" fill="none" stroke="#dadada" stroke-width="1.7"/></svg>
<div class="vd" style="left:2340px;top:846px"></div>
<div class="t vdt b" style="left:2395.60px;top:854.68px;font-size:18.1px;font-weight:700;color:#d6d6d6;letter-spacing:1.372px">View Details</div>
<div class="c" style="left:290px;top:902px;width:554px;height:68px"></div>
<div class="c" style="left:846px;top:902px;width:542px;height:68px"></div>
<div class="c" style="left:1390px;top:902px;width:220px;height:68px"></div>
<div class="c" style="left:1612px;top:902px;width:332px;height:68px"></div>
<div class="c" style="left:1946px;top:902px;width:374px;height:68px"></div>
<div class="c" style="left:2322px;top:902px;width:268px;height:68px"></div>
<svg class="av" style="left:304px;top:912px" viewBox="0 0 48 48"><circle cx="24" cy="24" r="24" fill="#4c4c4c"/>
<circle cx="23.8" cy="21.8" r="14.6" fill="none" stroke="#272727" stroke-width="2.3"/>
<circle cx="23.8" cy="19.6" r="4.4" fill="none" stroke="#272727" stroke-width="2.3"/>
<path d="M11.6 29.4 Q23.8 19.6 36 29.4" fill="none" stroke="#272727" stroke-width="2.3"/></svg>
<div class="t nm" style="left:361.50px;top:921.81px;font-size:24.2px;font-weight:400;color:#d1d1d1;letter-spacing:0.900px">Delphine Cormier</div>
<div class="t em" style="left:863.50px;top:921.81px;font-size:24.2px;font-weight:400;color:#d1d1d1;letter-spacing:0.696px">delphine@dyadinstitute.com</div>
<div class="badge" style="left:1408px;top:916px"></div>
<div class="t ed ns b" style="left:1458.80px;top:926.76px;font-size:16px;font-weight:700;color:#292929;letter-spacing:2.585px">EDITING</div>
<div class="t ls" style="left:1629.60px;top:921.81px;font-size:24.2px;font-weight:400;color:#d1d1d1;letter-spacing:0.926px">a month ago</div>
<div class="sel" style="left:1964px;top:918px"></div>
<div class="t as" style="left:1983.50px;top:927.01px;font-size:18.3px;font-weight:400;color:#d6d6d6;letter-spacing:0.569px">Gavin Belson</div>
<svg class="abs" style="left:2278.5px;top:924.2px" width="12" height="22" viewBox="0 0 12 22"><path d="M2.4 6.1 L6.1 2.5 L9.8 6.1 M2.4 14 L6.1 17.7 L9.8 14" fill="none" stroke="#dadada" stroke-width="1.7"/></svg>
<div class="vd" style="left:2340px;top:916px"></div>
<div class="t vdt b" style="left:2395.60px;top:924.68px;font-size:18.1px;font-weight:700;color:#d6d6d6;letter-spacing:1.372px">View Details</div>
<div class="c" style="left:290px;top:972px;width:554px;height:68px"></div>
<div class="c" style="left:846px;top:972px;width:542px;height:68px"></div>
<div class="c" style="left:1390px;top:972px;width:220px;height:68px"></div>
<div class="c" style="left:1612px;top:972px;width:332px;height:68px"></div>
<div class="c" style="left:1946px;top:972px;width:374px;height:68px"></div>
<div class="c" style="left:2322px;top:972px;width:268px;height:68px"></div>
<svg class="av" style="left:304px;top:982px" viewBox="0 0 48 48"><rect width="48" height="48" fill="#a19d99"/>
<g filter="url(#b2)">
<rect x="-1" y="0" width="12" height="48" fill="#7db5a8"/><rect x="4" y="0" width="3" height="48" fill="#98aaa4"/>
<rect x="29" y="0" width="6" height="30" fill="#86b2a8"/>
<rect x="40" y="0" width="4" height="48" fill="#aaa39f"/>
<path d="M0 37 Q8 31 17 30.5 L35 30 Q43 31 48 36 L48 48 L0 48Z" fill="#12264c"/>
<path d="M16.5 31 L25.3 47 L35 30Z" fill="#ab8f85"/>
<path d="M13 12 Q14 4 24 4 Q33 5 34 14 L34.5 22 Q33 31 26 33.5 Q18 33 14 26 Z" fill="#b69b90"/>
<path d="M11.5 15 Q11 1 23 0.5 Q34 1 34.5 15 Q31 8 23 7.5 Q14 8 13.5 16Z" fill="#2f2420"/>
<path d="M11.5 17.5 L33 15.5" stroke="#3a2c28" stroke-width="1.6"/>
<rect x="12.5" y="16.2" width="8.5" height="5" rx="1" fill="none" stroke="#3a2c28" stroke-width="1.4"/>
<rect x="23.6" y="15.2" width="8.8" height="5" rx="1" fill="none" stroke="#3a2c28" stroke-width="1.4"/>
<path d="M20 27.5 Q24 29 28 27" stroke="#94675f" stroke-width="1" fill="none"/>
</g></svg>
<div class="t nm" style="left:361.50px;top:991.81px;font-size:24.2px;font-weight:400;color:#d1d1d1;letter-spacing:1.000px">Donnie Hendrix</div>
<div class="t em" style="left:863.50px;top:991.81px;font-size:24.2px;font-weight:400;color:#d1d1d1;letter-spacing:0.755px">donnie@wealthgroup.com</div>
<div class="badge" style="left:1408px;top:986px"></div>
<div class="t ed ns b" style="left:1458.80px;top:996.76px;font-size:16px;font-weight:700;color:#292929;letter-spacing:2.585px">EDITING</div>
<div class="t ls" style="left:1628.80px;top:991.14px;font-size:25.0px;font-weight:400;color:#d1d1d1;letter-spacing:2.070px">NA</div>
<div class="sel" style="left:1964px;top:988px"></div>
<div class="t as" style="left:1984.50px;top:997.01px;font-size:18.3px;font-weight:400;color:#d6d6d6;letter-spacing:0.542px">All Officers</div>
<svg class="abs" style="left:2278.5px;top:994.2px" width="12" height="22" viewBox="0 0 12 22"><path d="M2.4 6.1 L6.1 2.5 L9.8 6.1 M2.4 14 L6.1 17.7 L9.8 14" fill="none" stroke="#dadada" stroke-width="1.7"/></svg>
<div class="vd" style="left:2340px;top:986px"></div>
<div class="t vdt b" style="left:2395.60px;top:994.68px;font-size:18.1px;font-weight:700;color:#d6d6d6;letter-spacing:1.372px">View Details</div>
<div class="c" style="left:290px;top:1042px;width:554px;height:68px"></div>
<div class="c" style="left:846px;top:1042px;width:542px;height:68px"></div>
<div class="c" style="left:1390px;top:1042px;width:220px;height:68px"></div>
<div class="c" style="left:1612px;top:1042px;width:332px;height:68px"></div>
<div class="c" style="left:1946px;top:1042px;width:374px;height:68px"></div>
<div class="c" style="left:2322px;top:1042px;width:268px;height:68px"></div>
<svg class="av" style="left:304px;top:1052px" viewBox="0 0 48 48"><circle cx="24" cy="24" r="24" fill="#4c4c4c"/>
<circle cx="23.8" cy="21.8" r="14.6" fill="none" stroke="#272727" stroke-width="2.3"/>
<circle cx="23.8" cy="19.6" r="4.4" fill="none" stroke="#272727" stroke-width="2.3"/>
<path d="M11.6 29.4 Q23.8 19.6 36 29.4" fill="none" stroke="#272727" stroke-width="2.3"/></svg>
<div class="t nm" style="left:361.50px;top:1061.81px;font-size:24.2px;font-weight:400;color:#d1d1d1;letter-spacing:0.711px">Felix Dawkins</div>
<div class="t em" style="left:863.50px;top:1061.81px;font-size:24.2px;font-weight:400;color:#d1d1d1;letter-spacing:0.621px">felix@dawkins-group.com</div>
<div class="badge" style="left:1408px;top:1056px"></div>
<div class="t ed ns b" style="left:1458.80px;top:1066.76px;font-size:16px;font-weight:700;color:#292929;letter-spacing:2.585px">EDITING</div>
<div class="t ls" style="left:1628.80px;top:1061.14px;font-size:25.0px;font-weight:400;color:#d1d1d1;letter-spacing:2.070px">NA</div>
<div class="sel" style="left:1964px;top:1058px"></div>
<div class="t as" style="left:1984.50px;top:1067.01px;font-size:18.3px;font-weight:400;color:#d6d6d6;letter-spacing:0.542px">All Officers</div>
<svg class="abs" style="left:2278.5px;top:1064.2px" width="12" height="22" viewBox="0 0 12 22"><path d="M2.4 6.1 L6.1 2.5 L9.8 6.1 M2.4 14 L6.1 17.7 L9.8 14" fill="none" stroke="#dadada" stroke-width="1.7"/></svg>
<div class="vd" style="left:2340px;top:1056px"></div>
<div class="t vdt b" style="left:2395.60px;top:1064.68px;font-size:18.1px;font-weight:700;color:#d6d6d6;letter-spacing:1.372px">View Details</div>
<div class="c" style="left:290px;top:1112px;width:554px;height:68px"></div>
<div class="c" style="left:846px;top:1112px;width:542px;height:68px"></div>
<div class="c" style="left:1390px;top:1112px;width:220px;height:68px"></div>
<div class="c" style="left:1612px;top:1112px;width:332px;height:68px"></div>
<div class="c" style="left:1946px;top:1112px;width:374px;height:68px"></div>
<div class="c" style="left:2322px;top:1112px;width:268px;height:68px"></div>
<svg class="av" style="left:304px;top:1122px" viewBox="0 0 48 48"><rect width="48" height="48" fill="#a8a8ac"/>
<g filter="url(#b2)">
<path d="M2 32 Q6 25 15 23.5 L30 23.5 Q38 25 38.5 34 L38 46 L8 48 Z" fill="#1c3038"/>
<path d="M6 38 Q10 24 18 22.5 L28 22.5 Q32 26 31 36 L31 48 L12 48 Q6 44 6 38Z" fill="#958c76"/>
<path d="M12 30 L18 36 L16 46 M25 26 L28 40" stroke="#7a6038" stroke-width="2.4" fill="none"/>
<path d="M17 32 L25 39 L23 47 M10 40 L15 46" stroke="#60789a" stroke-width="2.6" fill="none"/>
<path d="M20 24 L27 24 L25 31 L21 30Z" fill="#b39a8c"/>
<ellipse cx="23.5" cy="16.3" rx="5.4" ry="6.8" fill="#b99f93"/>
<path d="M14.5 19 Q12 2 23.5 1.5 Q34 2 31.5 19 Q30 11 24 10 Q18 10.5 17.5 19Z" fill="#c9c7c5"/>
<path d="M21 20 h4.5" stroke="#a8343a" stroke-width="1.5"/>
</g></svg>
<div class="t nm" style="left:361.50px;top:1131.81px;font-size:24.2px;font-weight:400;color:#d1d1d1;letter-spacing:0.721px">Kendall Malone</div>
<div class="t em" style="left:863.50px;top:1131.81px;font-size:24.2px;font-weight:400;color:#d1d1d1;letter-spacing:0.472px">k.malone@kmm-llc.com</div>
<div class="badge" style="left:1408px;top:1126px"></div>
<div class="t ed ns b" style="left:1458.80px;top:1136.76px;font-size:16px;font-weight:700;color:#292929;letter-spacing:2.585px">EDITING</div>
<div class="t ls" style="left:1628.80px;top:1131.14px;font-size:25.0px;font-weight:400;color:#d1d1d1;letter-spacing:2.070px">NA</div>
<div class="sel" style="left:1964px;top:1128px"></div>
<div class="t as" style="left:1984.50px;top:1137.01px;font-size:18.3px;font-weight:400;color:#d6d6d6;letter-spacing:0.542px">All Officers</div>
<svg class="abs" style="left:2278.5px;top:1134.2px" width="12" height="22" viewBox="0 0 12 22"><path d="M2.4 6.1 L6.1 2.5 L9.8 6.1 M2.4 14 L6.1 17.7 L9.8 14" fill="none" stroke="#dadada" stroke-width="1.7"/></svg>
<div class="vd" style="left:2340px;top:1126px"></div>
<div class="t vdt b" style="left:2395.60px;top:1134.68px;font-size:18.1px;font-weight:700;color:#d6d6d6;letter-spacing:1.372px">View Details</div>
<div class="c" style="left:290px;top:1182px;width:554px;height:68px"></div>
<div class="c" style="left:846px;top:1182px;width:542px;height:68px"></div>
<div class="c" style="left:1390px;top:1182px;width:220px;height:68px"></div>
<div class="c" style="left:1612px;top:1182px;width:332px;height:68px"></div>
<div class="c" style="left:1946px;top:1182px;width:374px;height:68px"></div>
<div class="c" style="left:2322px;top:1182px;width:268px;height:68px"></div>
<svg class="av" style="left:304px;top:1192px" viewBox="0 0 48 48"><rect width="48" height="48" fill="#a1a1a1"/>
<g filter="url(#b2)">
<path d="M10.5 40 Q9 10 23.5 7.7 Q38 9 36.5 40 Z" fill="#4a382c"/>
<path d="M4 41 Q9 36.5 17 36 L31 36 Q40 36.5 44 40 L44 48 L4 48Z" fill="#142c90"/>
<path d="M17 36 L32 36 L30 48 L19 48Z" fill="#a98268"/>
<path d="M16.5 20 Q17 13.5 23.5 13.5 Q30 13.5 30.5 20 Q30.5 29 27 32 Q23.5 34 20 32 Q16.5 29 16.5 20Z" fill="#b48c74"/>
<path d="M19.5 36 L28 36 L27 31 L20.5 31Z" fill="#a27b64"/>
<path d="M20.3 26.6 Q23.5 29.8 27 26.6Z" fill="#e4dad4"/>
<path d="M19 19.5 h3 M25 19.5 h3" stroke="#3e2c26" stroke-width="1"/>
</g></svg>
<div class="t nm" style="left:361.50px;top:1201.81px;font-size:24.2px;font-weight:400;color:#d1d1d1;letter-spacing:0.557px">Laurie Bream</div>
<div class="t em" style="left:863.50px;top:1201.81px;font-size:24.2px;font-weight:400;color:#d1d1d1;letter-spacing:0.389px">laurie@advisor.com</div>
<div class="badge" style="left:1408px;top:1196px"></div>
<div class="t ed ns b" style="left:1458.80px;top:1206.76px;font-size:16px;font-weight:700;color:#292929;letter-spacing:2.585px">EDITING</div>
<div class="t ls" style="left:1629.80px;top:1201.81px;font-size:24.2px;font-weight:400;color:#d1d1d1;letter-spacing:0.932px">24 minutes ago</div>
<div class="sel" style="left:1964px;top:1198px"></div>
<div class="t as" style="left:1983.20px;top:1207.01px;font-size:18.3px;font-weight:400;color:#d6d6d6;letter-spacing:0.618px">Richard Hendricks</div>
<svg class="abs" style="left:2278.5px;top:1204.2px" width="12" height="22" viewBox="0 0 12 22"><path d="M2.4 6.1 L6.1 2.5 L9.8 6.1 M2.4 14 L6.1 17.7 L9.8 14" fill="none" stroke="#dadada" stroke-width="1.7"/></svg>
<div class="vd" style="left:2340px;top:1196px"></div>
<div class="t vdt b" style="left:2395.60px;top:1204.68px;font-size:18.1px;font-weight:700;color:#d6d6d6;letter-spacing:1.372px">View Details</div>
<div class="c" style="left:290px;top:1252px;width:554px;height:68px"></div>
<div class="c" style="left:846px;top:1252px;width:542px;height:68px"></div>
<div class="c" style="left:1390px;top:1252px;width:220px;height:68px"></div>
<div class="c" style="left:1612px;top:1252px;width:332px;height:68px"></div>
<div class="c" style="left:1946px;top:1252px;width:374px;height:68px"></div>
<div class="c" style="left:2322px;top:1252px;width:268px;height:68px"></div>
<svg class="av" style="left:304px;top:1262px" viewBox="0 0 48 48"><circle cx="24" cy="24" r="24" fill="#4c4c4c"/>
<circle cx="23.8" cy="21.8" r="14.6" fill="none" stroke="#272727" stroke-width="2.3"/>
<circle cx="23.8" cy="19.6" r="4.4" fill="none" stroke="#272727" stroke-width="2.3"/>
<path d="M11.6 29.4 Q23.8 19.6 36 29.4" fill="none" stroke="#272727" stroke-width="2.3"/></svg>
<div class="t nm" style="left:361.50px;top:1271.81px;font-size:24.2px;font-weight:400;color:#d1d1d1;letter-spacing:1.102px">nick-dimatteo2-7265862</div>
<div class="t em" style="left:863.50px;top:1271.81px;font-size:24.2px;font-weight:400;color:#d1d1d1;letter-spacing:0.545px">nick.dimatteo+2@gmail.com</div>
<div class="badge" style="left:1408px;top:1266px"></div>
<div class="t ed ns b" style="left:1458.80px;top:1276.76px;font-size:16px;font-weight:700;color:#292929;letter-spacing:2.585px">EDITING</div>
<div class="t ls" style="left:1629.60px;top:1271.81px;font-size:24.2px;font-weight:400;color:#d1d1d1;letter-spacing:0.926px">a month ago</div>
<div class="sel" style="left:1964px;top:1268px"></div>
<div class="t as" style="left:1983.50px;top:1277.01px;font-size:18.3px;font-weight:400;color:#d6d6d6;letter-spacing:0.569px">Gavin Belson</div>
<svg class="abs" style="left:2278.5px;top:1274.2px" width="12" height="22" viewBox="0 0 12 22"><path d="M2.4 6.1 L6.1 2.5 L9.8 6.1 M2.4 14 L6.1 17.7 L9.8 14" fill="none" stroke="#dadada" stroke-width="1.7"/></svg>
<div class="vd" style="left:2340px;top:1266px"></div>
<div class="t vdt b" style="left:2395.60px;top:1274.68px;font-size:18.1px;font-weight:700;color:#d6d6d6;letter-spacing:1.372px">View Details</div>
<div class="c" style="left:290px;top:1322px;width:554px;height:68px"></div>
<div class="c" style="left:846px;top:1322px;width:542px;height:68px"></div>
<div class="c" style="left:1390px;top:1322px;width:220px;height:68px"></div>
<div class="c" style="left:1612px;top:1322px;width:332px;height:68px"></div>
<div class="c" style="left:1946px;top:1322px;width:374px;height:68px"></div>
<div class="c" style="left:2322px;top:1322px;width:268px;height:68px"></div>
<svg class="av" style="left:304px;top:1332px" viewBox="0 0 48 48"><rect width="48" height="48" fill="#262525"/>
<g filter="url(#b2)">
<path d="M12 33 Q9 3 26 2 Q43 3 40 33 Q37 37 31 36 L20 36 Q14 37 12 33Z" fill="#6e4a30"/>
<path d="M16 12 Q20 3 30 4 Q24 6 20 14Z" fill="#946c48"/>
<path d="M16 20 Q16 11 25 11 Q34 11 34.5 20 Q34.5 31 30.5 36 Q25 40.5 20 36 Q16 31 16 20Z" fill="#a6816c"/>
<path d="M19 36 L32 36 L33 46 L18 46Z" fill="#9c7966"/>
<path d="M9.5 43.5 L16.5 40 L18 45.5 Z M39.5 43.5 L34 40.5 L32.5 45Z" fill="#dcdcdc"/>
<path d="M8 48 L12 44 L25 47 L37 44 L41 48Z" fill="#191818"/>
<path d="M21 30.4 H28" stroke="#923f3a" stroke-width="1.4"/>
<path d="M19 20.5 h4.5 M26.5 20.5 h4.5" stroke="#4a3228" stroke-width="1.1"/>
<path d="M24.5 21 v6" stroke="#8a6450" stroke-width="1.4"/>
</g></svg>
<div class="t nm" style="left:361.50px;top:1341.81px;font-size:24.2px;font-weight:400;color:#d1d1d1;letter-spacing:0.519px">Rachel Duncan</div>
<div class="t em" style="left:863.50px;top:1341.81px;font-size:24.2px;font-weight:400;color:#d1d1d1;letter-spacing:0.532px">rachel@duncanfinancial.com</div>
<div class="badge" style="left:1408px;top:1336px"></div>
<div class="t ed ns b" style="left:1458.80px;top:1346.76px;font-size:16px;font-weight:700;color:#292929;letter-spacing:2.585px">EDITING</div>
<div class="t ls" style="left:1629.80px;top:1341.81px;font-size:24.2px;font-weight:400;color:#d1d1d1;letter-spacing:0.996px">2 months ago</div>
<div class="sel" style="left:1964px;top:1338px"></div>
<div class="t as" style="left:1983.20px;top:1347.01px;font-size:18.3px;font-weight:400;color:#d6d6d6;letter-spacing:0.618px">Richard Hendricks</div>
<svg class="abs" style="left:2278.5px;top:1344.2px" width="12" height="22" viewBox="0 0 12 22"><path d="M2.4 6.1 L6.1 2.5 L9.8 6.1 M2.4 14 L6.1 17.7 L9.8 14" fill="none" stroke="#dadada" stroke-width="1.7"/></svg>
<div class="vd" style="left:2340px;top:1336px"></div>
<div class="t vdt b" style="left:2395.60px;top:1344.68px;font-size:18.1px;font-weight:700;color:#d6d6d6;letter-spacing:1.372px">View Details</div></body></html>
